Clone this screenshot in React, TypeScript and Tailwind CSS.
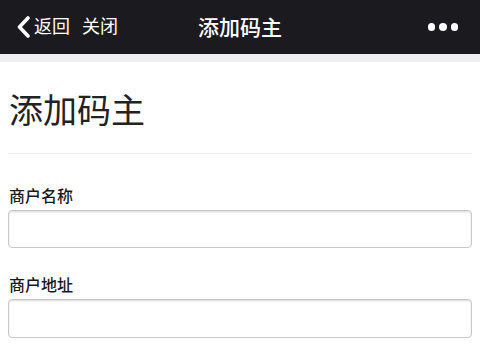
export default function App() {
  return (
    <div className="min-h-[360px] w-[480px] bg-white font-['Liberation_Sans','Noto_Sans_CJK_SC',sans-serif]">
      <header className="relative flex h-[54px] items-center bg-[#1b1b1f] text-white">
        <div className="flex items-center pl-[16px]">
          <svg width="15" height="22" viewBox="0 0 15 22" className="mr-[3px]">
            <path d="M12 2 L3.5 11 L12 20" fill="none" stroke="white" strokeWidth="3.6" strokeLinecap="round" strokeLinejoin="round" />
          </svg>
          <span className="text-[18px] leading-none">返回</span>
          <span className="ml-[12px] text-[18px] leading-none">关闭</span>
        </div>
        <h1 className="absolute left-0 right-0 text-center text-[21px] font-medium leading-none">添加码主</h1>
        <div className="ml-auto flex items-center gap-[4px] pr-[22px]">
          <span className="h-[7.5px] w-[7.5px] rounded-full bg-white" />
          <span className="h-[7.5px] w-[7.5px] rounded-full bg-white" />
          <span className="h-[7.5px] w-[7.5px] rounded-full bg-white" />
        </div>
      </header>
      <div className="h-[8px] bg-[#efeff1]" />
      <main className="px-[8px]">
        <div className="border-b border-[#eeeeee] pb-[22px] pt-[29px]">
          <h2 className="pl-[1px] text-[34px] font-normal leading-[40px] text-[#222222]">添加码主</h2>
        </div>
        <label className="mt-[33px] block pl-[1px] text-[16px] font-medium leading-[20px] text-[#1a1a1a]">商户名称</label>
        <input className="mt-[3px] block h-[38px] w-full rounded-[4px] border border-[#c8c8c8] bg-white shadow-[inset_0_1px_2px_rgba(0,0,0,0.15)] outline-none" />
        <label className="mt-[28px] block pl-[1px] text-[16px] font-medium leading-[20px] text-[#1a1a1a]">商户地址</label>
        <input className="mt-[3px] block h-[39px] w-full rounded-[4px] border border-[#c8c8c8] bg-white shadow-[inset_0_1px_2px_rgba(0,0,0,0.15)] outline-none" />
      </main>
    </div>
  )
}
